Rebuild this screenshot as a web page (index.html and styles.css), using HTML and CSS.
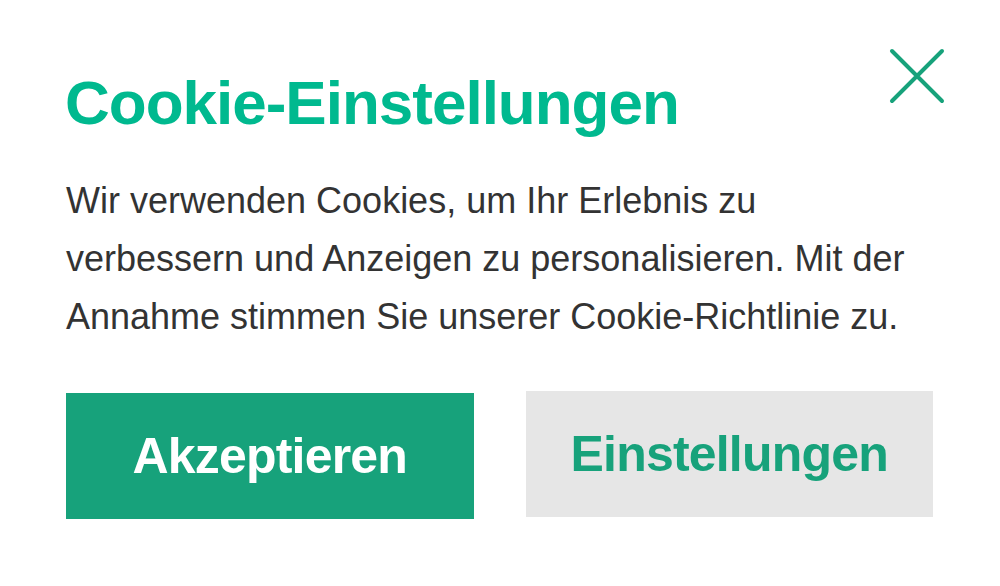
FILE: index.html
```html
<!DOCTYPE html>
<html lang="de">
<head>
  <meta charset="UTF-8" />
  <meta name="viewport" content="width=device-width, initial-scale=1.0"/>
  <title>Cookie-Einstellungen</title>
  <link rel="stylesheet" href="styles.css">
</head>
<body>
  <div class="dialog">
    <div class="dialog-head">
      <h1 class="dialog-title">Cookie-Einstellungen</h1>
      <button class="close-btn" aria-label="Schließen">
        <svg width="56" height="56" viewBox="0 0 56 56">
          <path d="M3 3 L53 53 M53 3 L3 53" stroke="#17a27b" stroke-width="4" stroke-linecap="round" fill="none"/>
        </svg>
      </button>
    </div>

    <p class="dialog-text">Wir verwenden Cookies, um Ihr Erlebnis zu verbessern und Anzeigen zu personalisieren. Mit der Annahme stimmen Sie unserer Cookie-Richtlinie zu.</p>

    <div class="actions">
      <button class="btn btn-accept">Akzeptieren</button>
      <button class="btn btn-settings">Einstellungen</button>
    </div>
  </div>
</body>
</html>
```

FILE: styles.css
```css
body {
  margin: 0;
  background: #fff;
  font-family: "Liberation Sans", Arial, sans-serif;
}
.dialog {
  padding: 48px 55px 0 66px;
}
.dialog-head {
  display: flex;
  justify-content: space-between;
  align-items: flex-start;
}
.dialog-title {
  margin: 24px 0 0 -1px;
  font-size: 62px;
  line-height: 62px;
  font-weight: bold;
  letter-spacing: -1px;
  color: #00b98f;
}
.close-btn {
  width: 56px;
  height: 56px;
  padding: 0;
  border: none;
  background: none;
  cursor: pointer;
}
.close-btn svg {
  display: block;
}
.dialog-text {
  width: 860px;
  margin: 38px 0 0;
  font-size: 36px;
  line-height: 58px;
  color: #333;
}
.actions {
  width: 867px;
  margin-top: 45px;
  display: grid;
  grid-template-columns: 1fr 1fr;
  gap: 52px;
  align-items: start;
}
.btn {
  height: 126px;
  border: none;
  font-family: inherit;
  font-size: 50px;
  font-weight: bold;
  letter-spacing: -0.8px;
  cursor: pointer;
}
.btn-accept {
  margin-top: 2px;
  background: #17a27b;
  color: #fff;
}
.btn-settings {
  background: #e6e6e6;
  color: #17a27b;
}
```
